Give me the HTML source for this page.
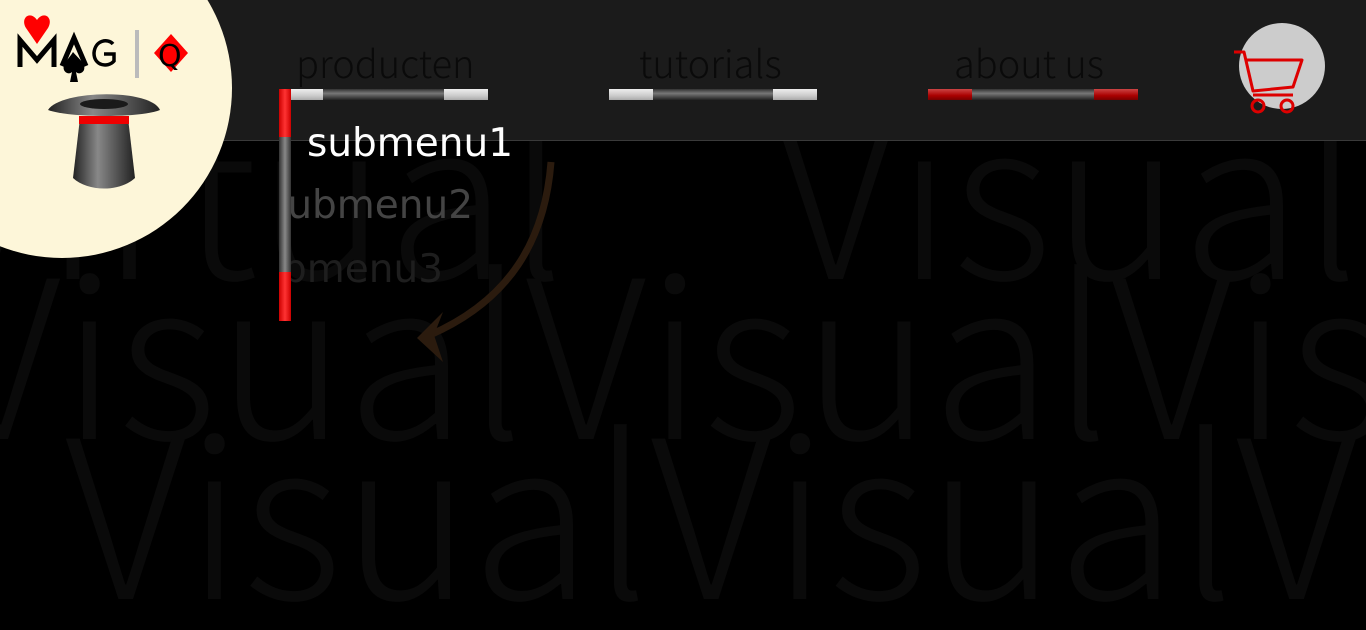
<!DOCTYPE html>
<html><head><meta charset="utf-8"><style>
html,body{margin:0;padding:0;width:1366px;height:630px;overflow:hidden;background:#000;font-family:"DejaVu Sans","Liberation Sans",sans-serif;}
.bg{position:absolute;left:0;top:0;width:1366px;height:630px;overflow:hidden;}
.bg div{position:absolute;white-space:nowrap;color:#0a0a0a;font-size:220px;line-height:1;font-family:"Noto Sans CJK JP",sans-serif;font-weight:300;}
.hdr{position:absolute;left:0;top:0;width:1366px;height:140px;background:#1b1b1b;border-bottom:1px solid #3a3a3a;}
.nav{position:absolute;top:38px;font-size:38px;color:#0a0a0a;font-family:"Noto Sans CJK JP","DejaVu Sans",sans-serif;font-weight:300;line-height:48px}
.wand{position:absolute;height:11px;background:linear-gradient(#333,#777 40%,#222);}
.tip{position:absolute;top:0;height:11px;width:44px;background:linear-gradient(#eee,#ccc 60%,#aaa);}
.red .tip{background:linear-gradient(#c44,#a00 60%,#700);}
.sub{position:absolute;font-size:38px;line-height:1;font-family:"DejaVu Sans",sans-serif}
</style></head><body>
<div class="bg">
<div style="right:800px;top:74px">Virtual</div>
<div style="left:775px;top:74px">Visual</div>
<div style="left:-60px;top:234px">VisualVisualVis</div>
<div style="left:65px;top:394px">VisualVisualV</div>
</div>
<div class="hdr"></div>
<div class="nav" style="left:296px">producten</div>
<div class="nav" style="left:639px">tutorials</div>
<div class="nav" style="left:954px">about us</div>
<div class="wand" style="left:290px;top:89px;width:198px"><div class="tip" style="left:0;width:33px"></div><div class="tip" style="right:0"></div></div>
<div class="wand" style="left:609px;top:89px;width:208px"><div class="tip" style="left:0"></div><div class="tip" style="right:0"></div></div>
<div class="wand red" style="left:928px;top:89px;width:210px"><div class="tip" style="left:0"></div><div class="tip" style="right:0"></div></div>
<div style="position:absolute;left:279px;top:89px;width:12px;height:232px;background:linear-gradient(90deg,#333,#888 50%,#333)">
<div style="position:absolute;left:0;top:0;width:12px;height:48px;background:linear-gradient(90deg,#c00,#f33 50%,#c00)"></div>
<div style="position:absolute;left:0;bottom:0;width:12px;height:49px;background:linear-gradient(90deg,#c00,#f33 50%,#c00)"></div>
</div>
<div class="sub" style="left:307px;top:124px;color:#fff;font-size:39px">submenu1</div>
<div style="position:absolute;left:291px;top:170px;width:260px;height:130px;overflow:hidden">
<div class="sub" style="left:-24px;top:16px;color:#444;font-size:39px">submenu2</div>
<div class="sub" style="left:-54px;top:80px;color:#1e1e1e;font-size:39px">submenu3</div>
</div>
<svg style="position:absolute;left:0;top:0" width="1366" height="630">
<path d="M551 162 C545 240 510 300 430 335" stroke="#2b1b0e" stroke-width="7" fill="none"/>
<path d="M417 338 L443 312 L434 335 L443 362 Z" fill="#2b1b0e"/>
<circle cx="62" cy="88" r="170" fill="#fdf6d9"/>
<path d="M20 67 L20 40 L37 60 L54 40 L54 67" stroke="#000" stroke-width="5" fill="none"/>
<path d="M37 20 C30 10 20 18 26 28 L37 44 L48 28 C54 18 44 10 37 20Z" fill="#f00"/>
<path d="M62 66 L74 38 L86 66" stroke="#000" stroke-width="5" fill="none"/>
<path d="M73 52 C68 60 62 64 64 70 C66 74 70 74 72 72 L70 82 L78 82 L76 72 C78 74 82 74 84 70 C86 64 80 60 73 52Z" fill="#000"/>
<path d="M113 44 C108 38 95 40 94 53 C94 66 108 68 114 61 L114 54 L104 54" stroke="#000" stroke-width="3.5" fill="none"/>
<rect x="135" y="30" width="4" height="48" fill="#bbb"/>
<path d="M171 34 L188 53 L171 72 L154 53Z" fill="#f00"/>
<text x="158" y="66" font-family="DejaVu Sans" font-size="30" fill="#000">Q</text>
<defs><linearGradient id="h" x1="0" x2="1"><stop offset="0" stop-color="#222"/><stop offset=".4" stop-color="#888"/><stop offset="1" stop-color="#222"/></linearGradient></defs>
<path d="M80 118 L128 118 L135 178 C120 192 88 192 73 178Z" fill="url(#h)"/>
<rect x="79" y="116" width="50" height="8" fill="#e00"/>
<path d="M48 110 C60 90 150 88 160 110 C140 118 70 118 48 110Z" fill="url(#h)"/>
<ellipse cx="104" cy="104" rx="24" ry="5" fill="#1a1a1a"/>
<circle cx="1282" cy="66" r="43" fill="#cccccc"/>
<path d="M1234 52 L1244 52 L1253 91 L1293 87 L1302 60 L1246 60 M1253 95 L1293 95" stroke="#d00" stroke-width="3" fill="none" stroke-linejoin="round"/>
<circle cx="1258" cy="106" r="6" stroke="#d00" stroke-width="3" fill="none"/>
<circle cx="1287" cy="106" r="6" stroke="#d00" stroke-width="3" fill="none"/>
</svg>
</body></html>
